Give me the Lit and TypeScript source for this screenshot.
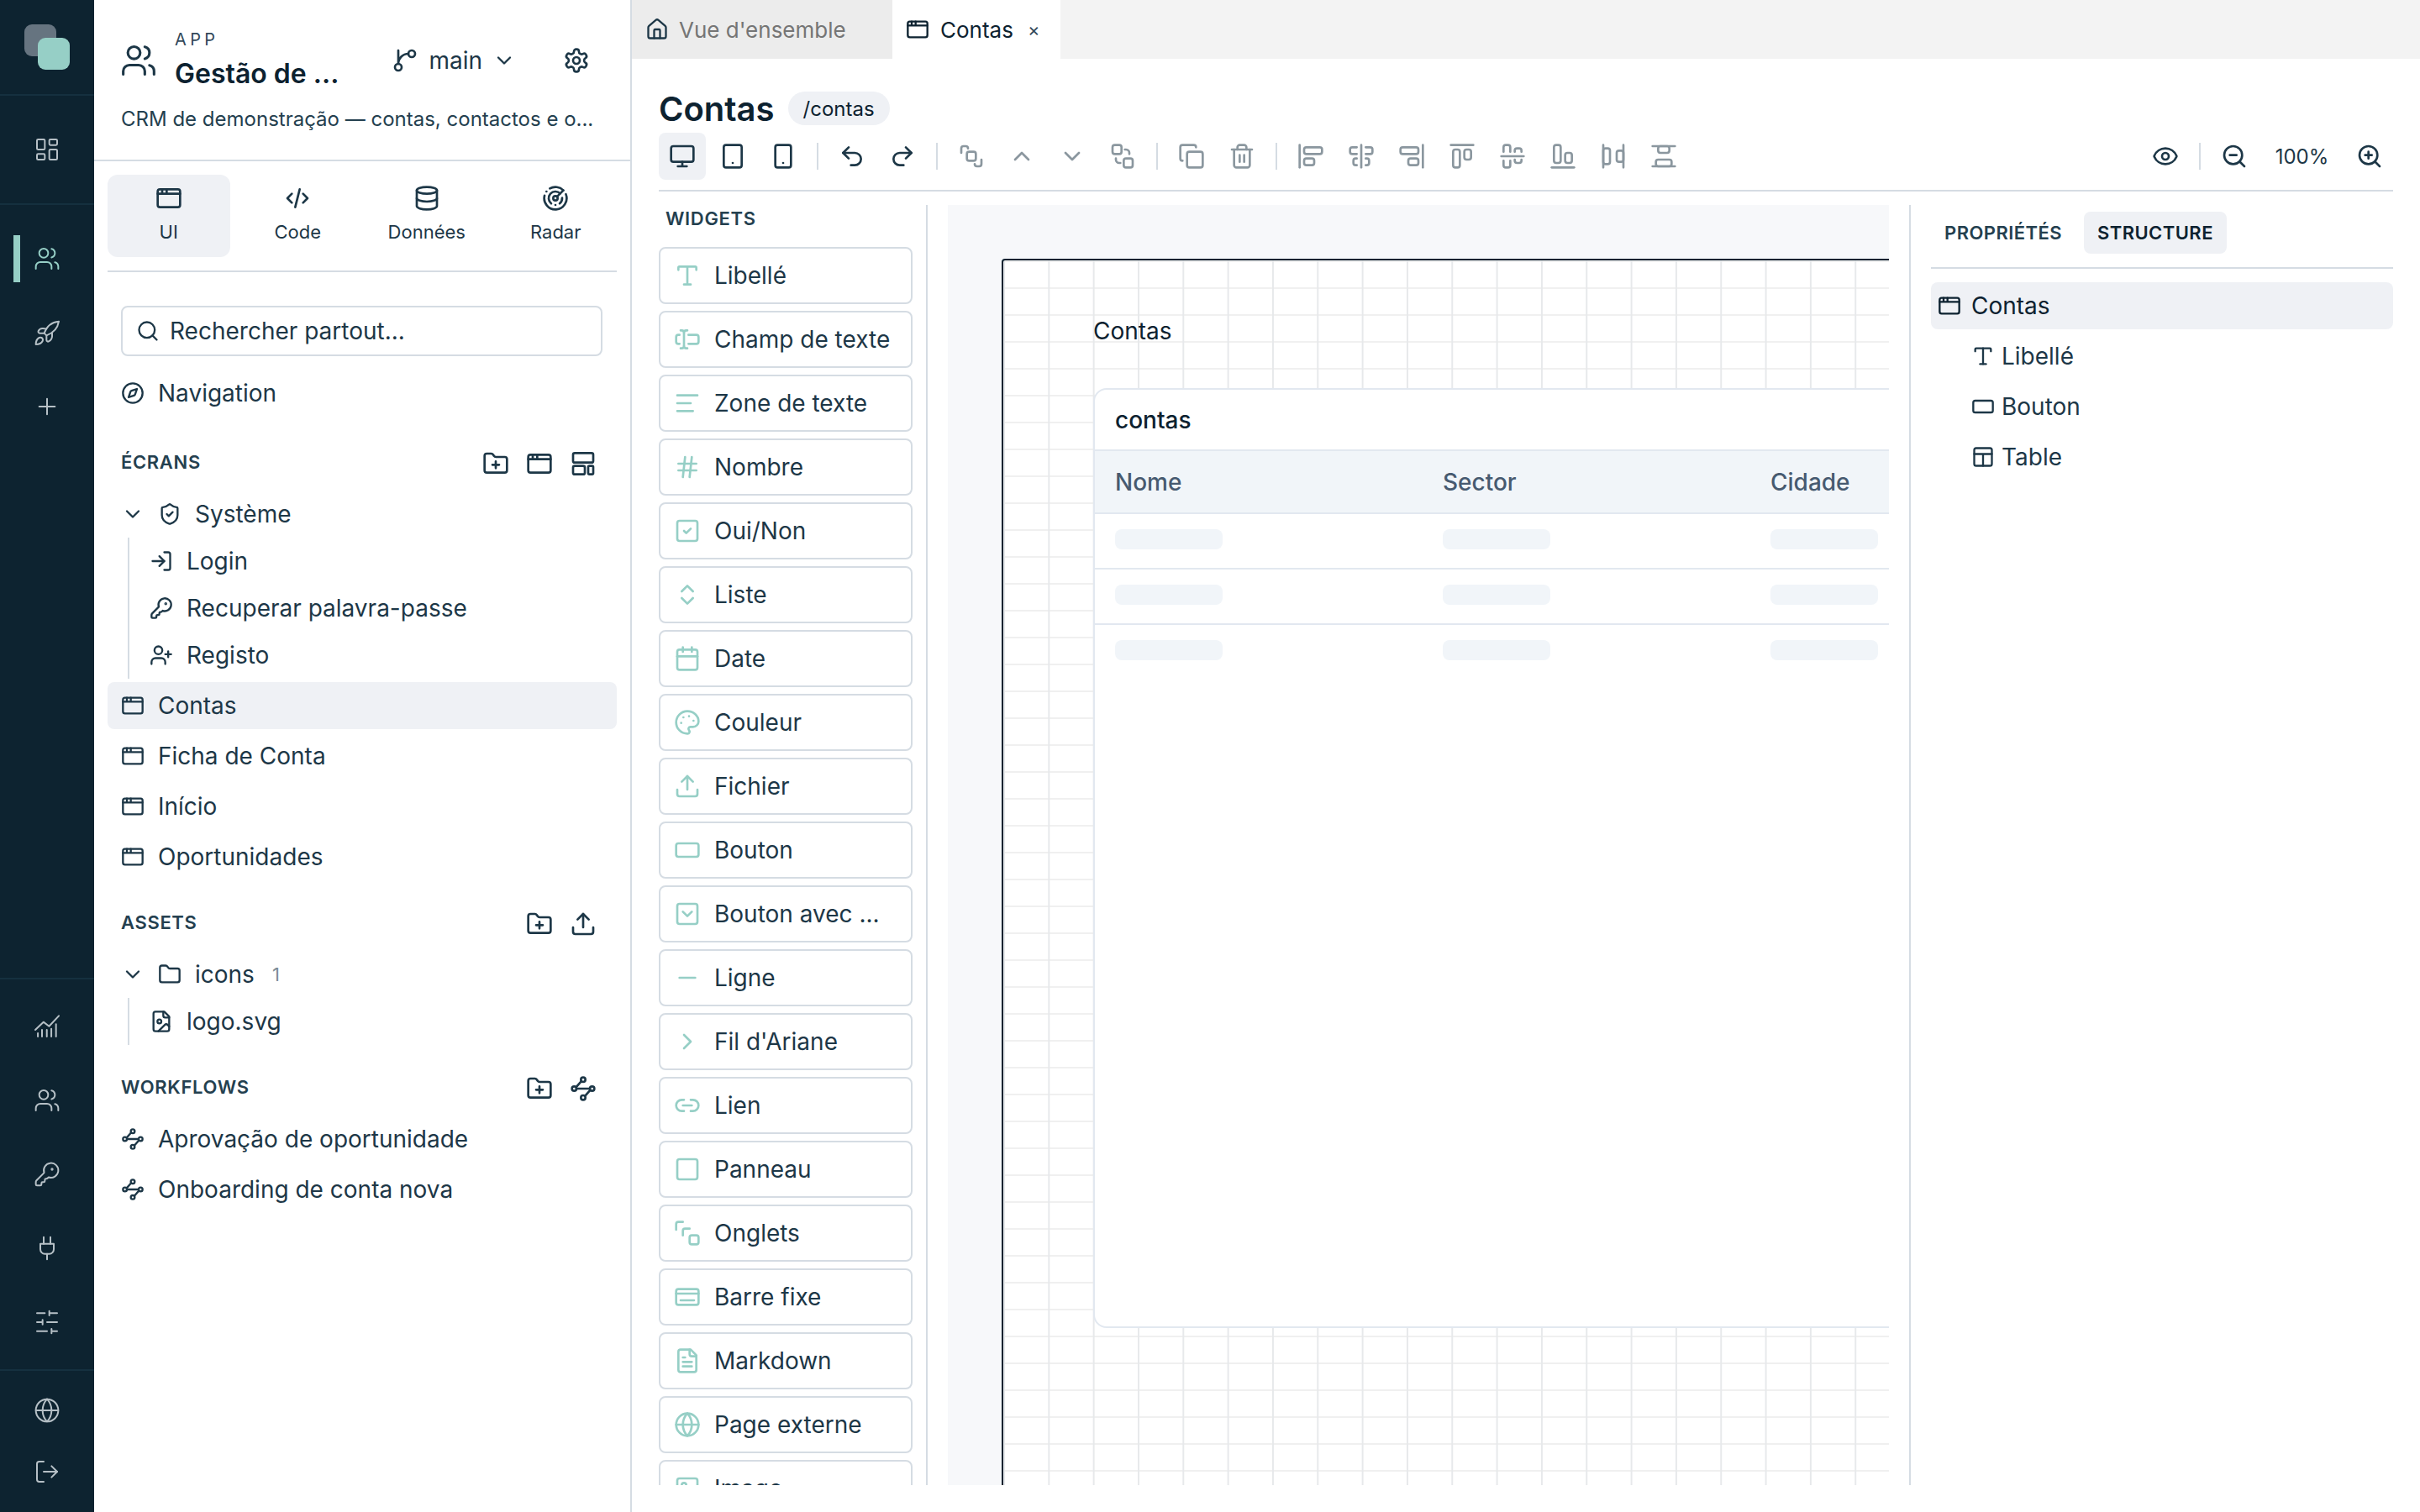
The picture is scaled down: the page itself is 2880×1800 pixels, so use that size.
import { LitElement, html, css, svg } from 'lit';
import { customElement } from 'lit/decorators.js';

const ICONS: Record<string, ReturnType<typeof svg>> = {
  dashboard: svg`<rect width="7" height="9" x="3" y="3" rx="1"/><rect width="7" height="5" x="14" y="3" rx="1"/><rect width="7" height="9" x="14" y="12" rx="1"/><rect width="7" height="5" x="3" y="16" rx="1"/>`,
  users: svg`<path d="M16 21v-2a4 4 0 0 0-4-4H6a4 4 0 0 0-4 4v2"/><circle cx="9" cy="7" r="4"/><path d="M22 21v-2a4 4 0 0 0-3-3.87"/><path d="M16 3.13a4 4 0 0 1 0 7.75"/>`,
  rocket: svg`<path d="M22.500 2C16 2.500 12 5.500 9.500 12.500l2 2C18.500 12 21.500 8 22.500 2Z"/><path d="M9.500 12.500H5.500C4.500 12.500 3.800 11.500 4.300 10.500c.7-1.400 2.300-2.300 3.900-2.200l3.300.3"/><path d="M11.500 14.500v4c0 1 1 1.800 2 1.300 1.700-.9 3-2.600 3-4.600V12.500"/><path d="M5 16.500C3 17.500 2 20.500 2 22.500c2 0 5-1 6-3 .7-1.400-.1-2.600-1-3-.6-.2-1.300-.2-2 0Z"/>`,
  plus: svg`<path d="M12 5v14M5 12h14"/>`,
  chart: svg`<path d="M1.500 15 8.800 8l5 3.800L22.500 2.500"/><path d="M3.800 21v-3M7.500 21v-6M11.800 21v-6M15.800 21v-7M20 21V10"/>`,
  key: svg`<path d="M2.586 17.414A2 2 0 0 0 2 18.828V21a1 1 0 0 0 1 1h3a1 1 0 0 0 1-1v-1a1 1 0 0 1 1-1h1a1 1 0 0 0 1-1v-1a1 1 0 0 1 1-1h.172a2 2 0 0 0 1.414-.586l.814-.814a6.500 6.500 0 1 0-4-4z"/><circle cx="16.500" cy="7.500" r=".5" fill="currentColor"/>`,
  plug: svg`<path d="M12 22v-5M9 8V2M15 8V2"/><path d="M18 8v5a4 4 0 0 1-4 4h-4a4 4 0 0 1-4-4V8Z"/>`,
  sliders: svg`<path d="M21 4h-7M10 4H3M21 12h-9M8 12H3M21 20h-5M12 20H3M14 2v4M8 10v4M16 18v4"/>`,
  globe: svg`<circle cx="12" cy="12" r="10"/><path d="M12 2a14.500 14.500 0 0 0 0 20 14.500 14.500 0 0 0 0-20"/><path d="M2 12h20"/>`,
  logout: svg`<path d="M9 21H5a2 2 0 0 1-2-2V5a2 2 0 0 1 2-2h4"/><path d="M16 17l5-5-5-5"/><path d="M21 12H9"/>`,
  branch: svg`<path d="M15 6a9 9 0 0 0-9 9V3"/><circle cx="18" cy="6" r="3"/><circle cx="6" cy="18" r="3"/>`,
  chevronDown: svg`<path d="m6 9 6 6 6-6"/>`,
  chevronUp: svg`<path d="m18 15-6-6-6 6"/>`,
  chevronRight: svg`<path d="m9 18 6-6-6-6"/>`,
  gear: svg`<path d="M12.220 2h-.44a2 2 0 0 0-2 2v.18a2 2 0 0 1-1 1.730l-.43.25a2 2 0 0 1-2 0l-.15-.08a2 2 0 0 0-2.730.73l-.22.38a2 2 0 0 0 .73 2.730l.15.1a2 2 0 0 1 1 1.720v.51a2 2 0 0 1-1 1.740l-.15.09a2 2 0 0 0-.73 2.730l.22.38a2 2 0 0 0 2.730.73l.15-.08a2 2 0 0 1 2 0l.43.25a2 2 0 0 1 1 1.730V20a2 2 0 0 0 2 2h.44a2 2 0 0 0 2-2v-.18a2 2 0 0 1 1-1.730l.43-.25a2 2 0 0 1 2 0l.15.08a2 2 0 0 0 2.730-.73l.22-.39a2 2 0 0 0-.73-2.730l-.15-.08a2 2 0 0 1-1-1.740v-.5a2 2 0 0 1 1-1.740l.15-.09a2 2 0 0 0 .73-2.730l-.22-.38a2 2 0 0 0-2.730-.73l-.15.08a2 2 0 0 1-2 0l-.43-.25a2 2 0 0 1-1-1.730V4a2 2 0 0 0-2-2z"/><circle cx="12" cy="12" r="3"/>`,
  browser: svg`<rect x="2" y="4" width="20" height="16" rx="2"/><path d="M10 4v4M2 8h20M6 4v4"/>`,
  code: svg`<path d="M7 8l-4 4 4 4M17 8l4 4-4 4M14 4l-4 16"/>`,
  database: svg`<ellipse cx="12" cy="5" rx="9" ry="3"/><path d="M3 5V19A9 3 0 0 0 21 19V5"/><path d="M3 12A9 3 0 0 0 21 12"/>`,
  radar: svg`<path d="M19.070 4.930A10 10 0 0 0 6.990 3.340"/><path d="M4 6h.01"/><path d="M2.290 9.620A10 10 0 1 0 21.310 8.350"/><path d="M16.240 7.760A6 6 0 1 0 8.230 16.670"/><path d="M12 18h.01"/><path d="M17.990 11.660A6 6 0 0 1 15.770 16.670"/><circle cx="12" cy="12" r="2"/><path d="m13.410 10.590 5.660-5.660"/>`,
  search: svg`<path d="m21 21-4.340-4.340"/><circle cx="11" cy="11" r="8"/>`,
  compass: svg`<circle cx="12" cy="12" r="10"/><path d="m16.240 7.760-1.804 5.411a2 2 0 0 1-1.265 1.265L7.760 16.240l1.804-5.411a2 2 0 0 1 1.265-1.265z"/>`,
  folderPlus: svg`<path d="M12 10v6M9 13h6"/><path d="M20 20a2 2 0 0 0 2-2V8a2 2 0 0 0-2-2h-7.900a2 2 0 0 1-1.690-.9L9.600 3.900A2 2 0 0 0 7.930 3H4a2 2 0 0 0-2 2v13a2 2 0 0 0 2 2Z"/>`,
  folder: svg`<path d="M20 20a2 2 0 0 0 2-2V8a2 2 0 0 0-2-2h-7.900a2 2 0 0 1-1.690-.9L9.600 3.900A2 2 0 0 0 7.930 3H4a2 2 0 0 0-2 2v13a2 2 0 0 0 2 2Z"/>`,
  layout: svg`<rect x="3" y="2.500" width="18" height="8.500" rx="1.500"/><rect x="3" y="14" width="10.500" height="7.500" rx="1.500"/><rect x="16.500" y="14" width="4.500" height="7.500" rx="1"/>`,
  shield: svg`<path d="M20 13c0 5-3.500 7.500-7.660 8.950a1 1 0 0 1-.67-.01C7.500 20.500 4 18 4 13V6a1 1 0 0 1 1-1c2 0 4.500-1.200 6.240-2.720a1.170 1.170 0 0 1 1.520 0C14.510 3.810 17 5 19 5a1 1 0 0 1 1 1z"/><path d="m9 12 2 2 4-4"/>`,
  login: svg`<path d="M15 3h4a2 2 0 0 1 2 2v14a2 2 0 0 1-2 2h-4"/><path d="M10 17l5-5-5-5"/><path d="M15 12H3"/>`,
  userPlus: svg`<path d="M16 21v-2a4 4 0 0 0-4-4H6a4 4 0 0 0-4 4v2"/><circle cx="9" cy="7" r="4"/><path d="M19 8v6M22 11h-6"/>`,
  upload: svg`<path d="M12 3v12"/><path d="m17 8-5-5-5 5"/><path d="M21 15v4a2 2 0 0 1-2 2H5a2 2 0 0 1-2-2v-4"/>`,
  fileImage: svg`<path d="M15 2H6a2 2 0 0 0-2 2v16a2 2 0 0 0 2 2h12a2 2 0 0 0 2-2V7Z"/><path d="M14 2v4a2 2 0 0 0 2 2h4"/><circle cx="10" cy="12" r="2"/><path d="m20 17-1.296-1.296a2.410 2.410 0 0 0-3.408 0L9 22"/>`,
  waypoints: svg`<circle cx="12" cy="4" r="2"/><path d="m10.400 5.400-4.600 5.200"/><circle cx="4" cy="12" r="2"/><path d="M6 12h12"/><circle cx="20" cy="12" r="2"/><path d="m13.600 18.600 4.600-5.200"/><circle cx="12" cy="20" r="2"/>`,
  home: svg`<path d="M15 21v-8a1 1 0 0 0-1-1h-4a1 1 0 0 0-1 1v8"/><path d="M3 10a2 2 0 0 1 .709-1.528l7-5.999a2 2 0 0 1 2.582 0l7 5.999A2 2 0 0 1 21 10v9a2 2 0 0 1-2 2H5a2 2 0 0 1-2-2z"/>`,
  monitor: svg`<rect x="2" y="3" width="20" height="14" rx="2"/><path d="M8 21h8M12 17v4"/>`,
  tablet: svg`<rect x="4" y="2" width="16" height="20" rx="2"/><path d="M12 18h.01"/>`,
  phone: svg`<rect x="5" y="2" width="14" height="20" rx="2"/><path d="M12 18h.01"/>`,
  undo: svg`<path d="M9 14 4 9l5-5"/><path d="M4 9h10.500a5.500 5.500 0 0 1 5.500 5.500a5.500 5.500 0 0 1-5.500 5.500H11"/>`,
  redo: svg`<path d="m15 14 5-5-5-5"/><path d="M20 9H9.500A5.500 5.500 0 0 0 4 14.500A5.500 5.500 0 0 0 9.500 20H13"/>`,
  group: svg`<path d="M3 9V5a2 2 0 0 1 2-2h2a2 2 0 0 1 2 2"/><rect x="8" y="8" width="8" height="8" rx="2"/><path d="M15 19a2 2 0 0 0 2 2h2a2 2 0 0 0 2-2v-4"/>`,
  ungroup: svg`<rect x="3" y="2" width="8" height="8" rx="2"/><rect x="13" y="14" width="8" height="8" rx="2"/><path d="M14 6h1a3 3 0 0 1 3 3v1"/><path d="M6 14v1a3 3 0 0 0 3 3h1"/>`,
  copy: svg`<rect x="8" y="8" width="14" height="14" rx="2"/><path d="M4 16c-1.100 0-2-.9-2-2V4c0-1.100.9-2 2-2h10c1.100 0 2 .9 2 2"/>`,
  trash: svg`<path d="M3 6h18"/><path d="M19 6v14c0 1-1 2-2 2H7c-1 0-2-1-2-2V6"/><path d="M8 6V4c0-1 1-2 2-2h4c1 0 2 1 2 2v2"/><path d="M10 11v6M14 11v6"/>`,
  alignLeft: svg`<rect width="9" height="6" x="6" y="14" rx="2"/><rect width="16" height="6" x="6" y="4" rx="2"/><path d="M2 2v20"/>`,
  alignCenterV: svg`<path d="M12 2v20"/><path d="M8 10H4a2 2 0 0 1-2-2V6c0-1.100.9-2 2-2h4"/><path d="M16 10h4a2 2 0 0 0 2-2V6a2 2 0 0 0-2-2h-4"/><path d="M8 20H7a2 2 0 0 1-2-2v-2c0-1.100.9-2 2-2h1"/><path d="M16 14h1a2 2 0 0 1 2 2v2a2 2 0 0 1-2 2h-1"/>`,
  alignRight: svg`<rect width="16" height="6" x="2" y="4" rx="2"/><rect width="9" height="6" x="9" y="14" rx="2"/><path d="M22 22V2"/>`,
  alignTop: svg`<rect width="6" height="16" x="4" y="6" rx="2"/><rect width="6" height="9" x="14" y="6" rx="2"/><path d="M22 2H2"/>`,
  alignCenterH: svg`<path d="M2 12h20"/><path d="M10 16v4a2 2 0 0 1-2 2H6a2 2 0 0 1-2-2v-4"/><path d="M10 8V4a2 2 0 0 0-2-2H6a2 2 0 0 0-2 2v4"/><path d="M20 15v1a2 2 0 0 1-2 2h-2a2 2 0 0 1-2-2v-1"/><path d="M14 8V7c0-1.100.9-2 2-2h2a2 2 0 0 1 2 2v1"/>`,
  alignBottom: svg`<rect width="6" height="16" x="4" y="2" rx="2"/><rect width="6" height="9" x="14" y="9" rx="2"/><path d="M22 22H2"/>`,
  spaceH: svg`<rect width="6" height="14" x="3" y="5" rx="2"/><rect width="6" height="10" x="15" y="7" rx="2"/><path d="M3 2v20M21 2v20"/>`,
  spaceV: svg`<rect width="14" height="6" x="5" y="15" rx="2"/><rect width="10" height="6" x="7" y="3" rx="2"/><path d="M2 21h20M2 3h20"/>`,
  eye: svg`<path d="M2.062 12.348a1 1 0 0 1 0-.696 10.750 10.750 0 0 1 19.876 0 1 1 0 0 1 0 .696 10.750 10.750 0 0 1-19.876 0"/><circle cx="12" cy="12" r="3"/>`,
  zoomOut: svg`<circle cx="11" cy="11" r="8"/><path d="m21 21-4.350-4.350M8 11h6"/>`,
  zoomIn: svg`<circle cx="11" cy="11" r="8"/><path d="m21 21-4.350-4.350M11 8v6M8 11h6"/>`,
  type: svg`<path d="M12 4v16"/><path d="M4 7V5a1 1 0 0 1 1-1h14a1 1 0 0 1 1 1v2"/><path d="M9 20h6"/>`,
  textInput: svg`<path d="M12 20h-1a2 2 0 0 1-2-2 2 2 0 0 1-2 2H6"/><path d="M13 8h7a2 2 0 0 1 2 2v4a2 2 0 0 1-2 2h-7"/><path d="M5 16H4a2 2 0 0 1-2-2v-4a2 2 0 0 1 2-2h1"/><path d="M6 4h1a2 2 0 0 1 2 2 2 2 0 0 1 2-2h1"/><path d="M9 6v12"/>`,
  lines: svg`<path d="M21 5H3M15 12H3M17 19H3"/>`,
  hash: svg`<path d="M4 9h16M4 15h16M10 3 8 21M16 3l-2 18"/>`,
  check: svg`<rect x="3" y="3" width="18" height="18" rx="2"/><path d="m9 12 2 2 4-4"/>`,
  updown: svg`<path d="m7 15 5 5 5-5M7 9l5-5 5 5"/>`,
  calendar: svg`<path d="M8 2v4M16 2v4"/><rect x="3" y="4" width="18" height="18" rx="2"/><path d="M3 10h18"/>`,
  palette: svg`<path d="M12 22a1 1 0 0 1 0-20 10 9 0 0 1 10 9 5 5 0 0 1-5 5h-2.250a1.750 1.750 0 0 0-1.400 2.800l.3.4a1.750 1.750 0 0 1-1.400 2.800z"/><path d="M13.500 6.500h.01M17.500 10.500h.01M6.500 12.500h.01M8.500 7.500h.01"/>`,
  button: svg`<rect x="2" y="6" width="20" height="12" rx="2"/>`,
  menuButton: svg`<rect x="3" y="3" width="18" height="18" rx="2"/><path d="m8 10 4 4 4-4"/>`,
  minus: svg`<path d="M5 12h14"/>`,
  link: svg`<path d="M9 17H7A5 5 0 0 1 7 7h2"/><path d="M15 7h2a5 5 0 1 1 0 10h-2"/><path d="M8 12h8"/>`,
  square: svg`<rect x="3" y="3" width="18" height="18" rx="2"/>`,
  tabs: svg`<path d="M2 9V4a2 2 0 0 1 2-2h4"/><path d="M8 14V10a2 2 0 0 1 2-2h4"/><rect x="14" y="14" width="8" height="8" rx="2"/>`,
  bar: svg`<rect x="2" y="5" width="20" height="14" rx="2"/><path d="M2 9h20M6 15h12"/>`,
  fileText: svg`<path d="M15 2H6a2 2 0 0 0-2 2v16a2 2 0 0 0 2 2h12a2 2 0 0 0 2-2V7Z"/><path d="M14 2v4a2 2 0 0 0 2 2h4"/><path d="M10 9H8M16 13H8M16 17H8"/>`,
  image: svg`<rect x="3" y="3" width="18" height="18" rx="2"/><circle cx="9" cy="9" r="2"/><path d="m21 15-3.086-3.086a2 2 0 0 0-2.828 0L6 21"/>`,
  table: svg`<rect x="3" y="3" width="18" height="18" rx="2"/><path d="M3 9h18M12 9v12"/>`,
};

const ic = (name: string, cls = '') =>
  html`<svg class="ic ${cls}" viewBox="0 0 24 24" fill="none" stroke="currentColor" stroke-linecap="round" stroke-linejoin="round">${ICONS[name]}</svg>`;

const WIDGETS = [
  ['type', 'Libellé'], ['textInput', 'Champ de texte'], ['lines', 'Zone de texte'], ['hash', 'Nombre'],
  ['check', 'Oui/Non'], ['updown', 'Liste'], ['calendar', 'Date'], ['palette', 'Couleur'],
  ['upload', 'Fichier'], ['button', 'Bouton'], ['menuButton', 'Bouton avec ...'], ['minus', 'Ligne'],
  ['chevronRight', "Fil d'Ariane"], ['link', 'Lien'], ['square', 'Panneau'], ['tabs', 'Onglets'],
  ['bar', 'Barre fixe'], ['fileText', 'Markdown'], ['globe', 'Page externe'], ['image', 'Image'],
];

const ALIGN = ['alignLeft', 'alignCenterV', 'alignRight', 'alignTop', 'alignCenterH', 'alignBottom', 'spaceH', 'spaceV'];

@customElement('app-root')
export class AppRoot extends LitElement {
  static styles = css`
    :host {
      display: flex;
      width: 2880px;
      height: 1800px;
      overflow: hidden;
      background: #fff;
      color: #1d3747;
      font-family: Inter, 'Liberation Sans', sans-serif;
      font-size: 28px;
    }
    * { box-sizing: border-box; }
    .ic { flex: none; width: 28px; height: 28px; stroke-width: 2; display: block; }
    .s32 { width: 32px; height: 32px; }
    .s44 { width: 44px; height: 44px; stroke-width: 1.7; margin-left: -1px; }

    /* rail */
    .rail { flex: none; width: 112px; background: #0d2330; color: #b6c0c6; display: flex; flex-direction: column; }
    .rail .ic { width: 32px; height: 32px; stroke-width: 1.5; }
    .rail-logo { height: 114px; border-bottom: 2px solid #15303f; position: relative; flex: none; }
    .logo-a, .logo-b { position: absolute; width: 38px; height: 38px; border-radius: 9px; }
    .logo-a { left: 29px; top: 29px; background: #667480; }
    .logo-b { left: 45px; top: 45px; background: #96cfc6; }
    .rail-sec { border-bottom: 2px solid #15303f; flex: none; padding: 20px 0; }
    .rail-sec.grow { flex: 1; }
    .rail-sec.tools { padding: 12px 0; }
    .rail-sec.end { border-bottom: none; padding: 10px 0 12px; }
    .rail-item { height: 88px; display: flex; align-items: center; justify-content: center; position: relative; }
    .rail-item.short { height: 73px; }
    .rail-item.active { color: #96cfc6; }
    .rail-item.active::before { content: ''; position: absolute; left: 16px; top: 16px; width: 8px; height: 56px; background: #96cfc6; }

    /* sidebar */
    .side { flex: none; width: 640px; border-right: 2px solid #d5dce3; display: flex; flex-direction: column; }
    .head { height: 192px; border-bottom: 2px solid #d5dce3; padding: 32px 48px 0 32px; flex: none; }
    .head-row { display: flex; align-items: center; height: 80px; }
    .head-title { flex: 1; margin-left: 21px; display: flex; flex-direction: column; gap: 7px; }
    .app { font-size: 20px; line-height: 24px; letter-spacing: 0.22em; color: #33495a; }
    .name { font-size: 32px; line-height: 44px; font-weight: 600; color: #0d2230; white-space: nowrap; }
    .main-label { margin: 0 12px 0 12px; }
    .gear { margin-left: 56px; }
    .desc { font-size: 24px; line-height: 32px; margin-top: 14px; white-space: nowrap; color: #24404f; }
    .tabs { margin: 16px 16px 0; padding-bottom: 16px; border-bottom: 2px solid #d5dce3; display: grid; grid-template-columns: repeat(4, 1fr); gap: 8px; flex: none; }
    .tab { height: 98px; border-radius: 12px; display: flex; flex-direction: column; align-items: center; padding-top: 12px; font-size: 22px; gap: 10px; line-height: 28px; }
    .tab.on { background: #eff1f5; }
    .search { margin: 40px 33px 16px 32px; height: 60px; border: 2px solid #d5dce3; border-radius: 8px; display: flex; align-items: center; padding: 0 16px; gap: 12px; flex: none; }
    .row { height: 56px; border-radius: 8px; margin: 0 16px; padding: 0 16px; display: flex; align-items: center; gap: 16px; white-space: nowrap; flex: none; }
    .row.on { background: #eff1f5; }
    .list { display: flex; flex-direction: column; gap: 4px; }
    .sec-head { height: 56px; margin: 22px 40px 6px 32px; display: flex; align-items: center; gap: 20px; flex: none; }
    .sec-head.first { margin-top: 26px; }
    .sec-head .ic { margin-top: 3px; }
    .sec-title { flex: 1; font-size: 22px; font-weight: 600; letter-spacing: 0.03em; color: #24404f; }
    .count { font-size: 22px; color: #7b8b95; margin-left: 5px; }
    .kids { margin-left: 40px; border-left: 2px solid #d5dce3; padding-left: 24px; }
    .kid { height: 56px; display: flex; align-items: center; gap: 16px; }

    /* main */
    .main { flex: 1; min-width: 0; display: flex; flex-direction: column; }
    .tabbar { height: 70px; background: #f3f3f3; display: flex; flex: none; font-size: 26px; }
    .doc { display: flex; align-items: center; padding-left: 16px; }
    .doc.idle { width: 310px; background: #ececec; color: #757575; gap: 12px; }
    .doc.idle .ic { color: #1d3747; }
    .doc.cur { width: 200px; background: #fff; color: #0d2230; gap: 13px; }
    .close { font-size: 22px; margin-left: 4px; color: #33495a; }
    .content { flex: 1; min-height: 0; padding: 39px 32px 32px; display: flex; flex-direction: column; }
    .title-row { display: flex; align-items: center; height: 40px; gap: 16px; flex: none; }
    .title { font-size: 40px; font-weight: 600; color: #0d2230; }
    .pill { height: 40px; padding: 0 18px; border-radius: 20px; background: #eff1f5; font-size: 24px; display: flex; align-items: center; color: #0d2230; }
    .toolbar { margin-top: 9px; padding-bottom: 12px; border-bottom: 2px solid #d5dce3; display: flex; align-items: center; gap: 4px; flex: none; }
    .btn { width: 56px; height: 56px; border-radius: 8px; display: flex; align-items: center; justify-content: center; flex: none; }
    .btn .ic { width: 32px; height: 32px; }
    .btn.on { background: #eff1f5; }
    .btn.off { color: #8b979f; }
    .sep { width: 2px; height: 32px; background: #d5dce3; margin: 0 8px; flex: none; }
    .spacer { flex: 1; }
    .pct { width: 97px; text-align: center; font-size: 24px; }

    .body { flex: 1; min-height: 0; margin-top: 16px; display: flex; }
    .widgets { flex: none; width: 320px; padding-right: 16px; border-right: 2px solid #d5dce3; overflow: hidden; }
    .w-title { height: 32px; line-height: 32px; margin: 0 0 18px 8px; font-size: 22px; font-weight: 600; letter-spacing: 0.03em; color: #24404f; }
    .w-list { display: flex; flex-direction: column; gap: 8px; }
    .w-card { height: 68px; border: 2px solid #d5dce3; border-radius: 8px; display: flex; align-items: center; padding-left: 16px; gap: 16px; white-space: nowrap; flex: none; }
    .w-card .ic { width: 32px; height: 32px; color: #96cfc6; }

    .canvas { flex: none; width: 1120px; margin: 0 24px; background: #f7f8fa; padding: 64px 0 0 64px; overflow: hidden; }
    .frame {
      width: 1600px;
      height: 1600px;
      border: 2px solid #0d2230;
      border-radius: 4px 0 0 0;
      padding: 64px 0 0 107px;
      background-color: #fff;
      background-image: linear-gradient(to right, #e7e9eb 2px, transparent 2px), linear-gradient(to bottom, #f0f0f0 2px, transparent 2px);
      background-size: 53.33px 32px;
    }
    .label { height: 40px; line-height: 40px; margin-bottom: 48px; color: #0d2230; }
    .card { width: 1200px; height: 1119px; background: #fff; border: 2px solid #e2e8f0; border-radius: 16px; overflow: hidden; }
    .card-title { height: 73px; padding-left: 24px; display: flex; align-items: center; font-weight: 500; color: #0d2230; border-bottom: 2px solid #e2e8f0; }
    .tr { display: grid; grid-template-columns: repeat(3, 390px); padding-left: 24px; }
    .tr.th { height: 75px; align-items: center; background: #f1f5f9; border-bottom: 2px solid #e2e8f0; color: #475a70; font-weight: 500; }
    .tr.td { height: 66px; padding-top: 18px; border-bottom: 2px solid #e2e8f0; }
    .tr.td.last { border-bottom: none; }
    .skel { width: 128px; height: 24px; border-radius: 8px; background: #f1f5f9; }

    .props { flex: 1; min-width: 0; border-left: 2px solid #d5dce3; padding: 8px 0 0 24px; }
    .p-tabs { display: flex; gap: 10px; padding-bottom: 16px; border-bottom: 2px solid #d5dce3; }
    .p-tab { height: 50px; padding: 0 16px; border-radius: 8px; display: flex; align-items: center; font-size: 22px; font-weight: 600; letter-spacing: 0.02em; color: #24404f; }
    .p-tab.on { background: #eff1f5; color: #0d2230; }
    .p-list { margin-top: 16px; display: flex; flex-direction: column; gap: 4px; }
    .p-row { height: 56px; border-radius: 8px; display: flex; align-items: center; }
    .p-row.on { background: #eff1f5; padding-left: 8px; gap: 12px; color: #0d2230; }
    .p-row.sub { padding-left: 48px; gap: 8px; }
  `;

  private renderRail() {
    return html`
      <nav class="rail">
        <div class="rail-logo"><div class="logo-a"></div><div class="logo-b"></div></div>
        <div class="rail-sec"><div class="rail-item">${ic('dashboard')}</div></div>
        <div class="rail-sec grow">
          <div class="rail-item active">${ic('users')}</div>
          <div class="rail-item">${ic('rocket')}</div>
          <div class="rail-item">${ic('plus')}</div>
        </div>
        <div class="rail-sec tools">
          ${['chart', 'users', 'key', 'plug', 'sliders'].map((n) => html`<div class="rail-item">${ic(n)}</div>`)}
        </div>
        <div class="rail-sec end">
          <div class="rail-item short">${ic('globe')}</div>
          <div class="rail-item short">${ic('logout')}</div>
        </div>
      </nav>
    `;
  }

  private renderSide() {
    const tabs = [['browser', 'UI'], ['code', 'Code'], ['database', 'Données'], ['radar', 'Radar']];
    return html`
      <aside class="side">
        <div class="head">
          <div class="head-row">
            ${ic('users', 's44')}
            <div class="head-title">
              <div class="app">APP</div>
              <div class="name">Gestão de ...</div>
            </div>
            ${ic('branch', 's32')}
            <span class="main-label">main</span>
            ${ic('chevronDown')}
            <span class="gear">${ic('gear', 's32')}</span>
          </div>
          <div class="desc">CRM de demonstração — contas, contactos e o...</div>
        </div>
        <div class="tabs">
          ${tabs.map(([i, t], n) => html`<div class="tab ${n === 0 ? 'on' : ''}">${ic(i, 's32')}<span>${t}</span></div>`)}
        </div>
        <div class="search">${ic('search')}<span>Rechercher partout...</span></div>
        <div class="row">${ic('compass')}Navigation</div>

        <div class="sec-head first">
          <span class="sec-title">ÉCRANS</span>
          ${ic('folderPlus', 's32')}${ic('browser', 's32')}${ic('layout', 's32')}
        </div>
        <div class="row">${ic('chevronDown')}${ic('shield')}Système</div>
        <div class="kids">
          <div class="kid">${ic('login')}Login</div>
          <div class="kid">${ic('key')}Recuperar palavra-passe</div>
          <div class="kid">${ic('userPlus')}Registo</div>
        </div>
        <div class="list" style="margin-top:4px">
          <div class="row on">${ic('browser')}Contas</div>
          <div class="row">${ic('browser')}Ficha de Conta</div>
          <div class="row">${ic('browser')}Início</div>
          <div class="row">${ic('browser')}Oportunidades</div>
        </div>

        <div class="sec-head">
          <span class="sec-title">ASSETS</span>
          ${ic('folderPlus', 's32')}${ic('upload', 's32')}
        </div>
        <div class="row">${ic('chevronDown')}${ic('folder')}icons<span class="count">1</span></div>
        <div class="kids"><div class="kid">${ic('fileImage')}logo.svg</div></div>

        <div class="sec-head">
          <span class="sec-title">WORKFLOWS</span>
          ${ic('folderPlus', 's32')}${ic('waypoints', 's32')}
        </div>
        <div class="list">
          <div class="row">${ic('waypoints')}Aprovação de oportunidade</div>
          <div class="row">${ic('waypoints')}Onboarding de conta nova</div>
        </div>
      </aside>
    `;
  }

  private renderToolbar() {
    const btn = (n: string, cls = '') => html`<div class="btn ${cls}">${ic(n)}</div>`;
    return html`
      <div class="toolbar">
        ${btn('monitor', 'on')}${btn('tablet')}${btn('phone')}
        <div class="sep"></div>
        ${btn('undo')}${btn('redo')}
        <div class="sep"></div>
        ${['group', 'chevronUp', 'chevronDown', 'ungroup'].map((n) => btn(n, 'off'))}
        <div class="sep"></div>
        ${btn('copy', 'off')}${btn('trash', 'off')}
        <div class="sep"></div>
        ${ALIGN.map((n) => btn(n, 'off'))}
        <div class="spacer"></div>
        ${btn('eye')}
        <div class="sep"></div>
        ${btn('zoomOut')}
        <div class="pct">100%</div>
        ${btn('zoomIn')}
      </div>
    `;
  }

  private renderCanvas() {
    const row = (last = false) => html`
      <div class="tr td ${last ? 'last' : ''}">
        <div class="skel"></div><div class="skel"></div><div class="skel"></div>
      </div>`;
    return html`
      <div class="canvas">
        <div class="frame">
          <div class="label">Contas</div>
          <div class="card">
            <div class="card-title">contas</div>
            <div class="tr th"><span>Nome</span><span>Sector</span><span>Cidade</span></div>
            ${row()}${row()}${row(true)}
          </div>
        </div>
      </div>
    `;
  }

  render() {
    return html`
      ${this.renderRail()}
      ${this.renderSide()}
      <main class="main">
        <div class="tabbar">
          <div class="doc idle">${ic('home')}Vue d'ensemble</div>
          <div class="doc cur">${ic('browser')}Contas<span class="close">×</span></div>
        </div>
        <div class="content">
          <div class="title-row"><span class="title">Contas</span><span class="pill">/contas</span></div>
          ${this.renderToolbar()}
          <div class="body">
            <div class="widgets">
              <div class="w-title">WIDGETS</div>
              <div class="w-list">
                ${WIDGETS.map(([i, t]) => html`<div class="w-card">${ic(i)}${t}</div>`)}
              </div>
            </div>
            ${this.renderCanvas()}
            <div class="props">
              <div class="p-tabs">
                <div class="p-tab">PROPRIÉTÉS</div>
                <div class="p-tab on">STRUCTURE</div>
              </div>
              <div class="p-list">
                <div class="p-row on">${ic('browser')}Contas</div>
                <div class="p-row sub">${ic('type')}Libellé</div>
                <div class="p-row sub">${ic('button')}Bouton</div>
                <div class="p-row sub">${ic('table')}Table</div>
              </div>
            </div>
          </div>
        </div>
      </main>
    `;
  }
}
